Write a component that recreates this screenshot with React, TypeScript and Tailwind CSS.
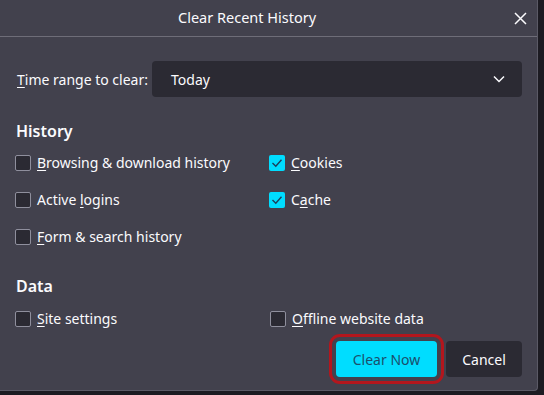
import React from "react";

const font = { fontFamily: '"Noto Sans", "Open Sans", sans-serif' };

function Box({ checked }: { checked?: boolean }) {
  if (checked) {
    return (
      <span className="flex h-[16px] w-[16px] shrink-0 items-center justify-center rounded-[2px] bg-[#00ddff]">
        <svg width="12" height="12" viewBox="0 0 12 12" fill="none">
          <polyline points="1.5,6 4.8,9.2 10.5,2.8" stroke="#1c3f5a" strokeWidth="1.4" />
        </svg>
      </span>
    );
  }
  return <span className="h-[16px] w-[16px] shrink-0 rounded-[2px] border border-[#8f8f9d] bg-[#2b2a33]" />;
}

function Check({ pre, key1, post, checked }: { pre?: string; key1: string; post: string; checked?: boolean }) {
  return (
    <div className="flex h-[37px] items-center gap-[6px]">
      <Box checked={checked} />
      <span className="whitespace-nowrap text-[14px] text-[#fbfbfe]">
        {pre}
        <span className="underline underline-offset-2">{key1}</span>
        {post}
      </span>
    </div>
  );
}

export default function App() {
  return (
    <div className="h-[395px] w-[544px] overflow-hidden bg-[#1c1b22]" style={font}>
      <div className="h-[391px] w-[538px] rounded-br-[4px] border-b border-r border-[#5b5a66] bg-[#42414d] text-[#fbfbfe]">
        <div className="flex h-[37px] items-center border-b border-[#6e6d78]">
          <div className="whitespace-nowrap pl-[178px] text-[14.5px]">Clear Recent History</div>
          <svg className="ml-auto mr-[10px]" width="13" height="13" viewBox="0 0 13 13" fill="none">
            <path d="M1 1L12 12M12 1L1 12" stroke="#fbfbfe" strokeWidth="1.5" />
          </svg>
        </div>

        <div className="mt-[24px] flex h-[36px] items-center">
          <div className="w-[152px] whitespace-nowrap pl-[17px] text-[14px]">
            <span className="underline underline-offset-2">T</span>ime range to clear:
          </div>
          <div className="flex h-[36px] w-[370px] items-center rounded-[4px] bg-[#2b2a33] pl-[19px] pr-[17px] text-[14px]">
            <span>Today</span>
            <svg className="ml-auto" width="12" height="8" viewBox="0 0 12 8" fill="none">
              <polyline points="1,1.5 6,6.5 11,1.5" stroke="#fbfbfe" strokeWidth="1.5" />
            </svg>
          </div>
        </div>

        <div className="mt-[24px] flex h-[20px] items-center pl-[16px] text-[16px] font-semibold">History</div>

        <div className="mt-[3px] grid grid-cols-[254px_1fr] pl-[15px]">
          <div>
            <Check key1="B" post="rowsing & download history" />
            <Check pre="Active " key1="l" post="ogins" />
            <Check key1="F" post="orm & search history" />
          </div>
          <div>
            <Check key1="C" post="ookies" checked />
            <Check pre="C" key1="a" post="che" checked />
          </div>
        </div>

        <div className="mt-[21px] flex h-[20px] items-center pl-[16px] text-[16px] font-semibold">Data</div>

        <div className="mt-[4px] grid grid-cols-[255px_1fr] pl-[15px]">
          <Check key1="S" post="ite settings" />
          <Check key1="O" post="ffline website data" />
        </div>

        <div className="mt-[4px] flex justify-end gap-[9px] pr-[15px]">
          <button className="h-[36px] w-[101px] rounded-[4px] bg-[#00ddff] text-[14px] text-[#1b4f6c] outline outline-[3px] outline-offset-[4px] outline-[#b3161d]">
            Clear Now
          </button>
          <button className="h-[36px] w-[76px] rounded-[4px] bg-[#2b2a33] text-[14px] text-[#fbfbfe]">
            Cancel
          </button>
        </div>
      </div>
    </div>
  );
}
